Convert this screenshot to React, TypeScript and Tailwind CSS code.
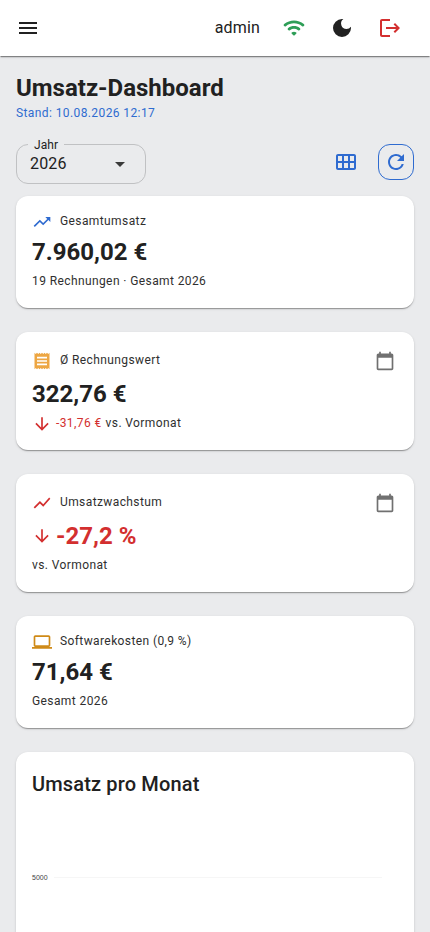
import type { ReactNode } from "react";
import {
  MdArrowDownward,
  MdArrowDropDown,
  MdCalendarToday,
  MdCalendarViewMonth,
  MdDarkMode,
  MdLaptop,
  MdLogout,
  MdMenu,
  MdReceipt,
  MdRefresh,
  MdShowChart,
  MdTrendingUp,
} from "react-icons/md";

const cardShadow =
  "shadow-[0px_2px_1px_-1px_rgba(0,0,0,0.2),0px_1px_1px_0px_rgba(0,0,0,0.14),0px_1px_3px_0px_rgba(0,0,0,0.12)]";

function WifiIcon() {
  return (
    <svg viewBox="0 0 24 24" width="24" height="24" fill="currentColor">
      <path d="M2.06 10.06c.51.51 1.32.56 1.87.1 4.67-3.84 11.45-3.84 16.13-.01.56.46 1.38.42 1.89-.09.59-.59.55-1.57-.1-2.1-5.71-4.67-13.97-4.67-19.69 0-.65.52-.7 1.5-.1 2.1zm7.76 7.76 1.47 1.47c.39.39 1.02.39 1.41 0l1.47-1.47c.47-.47.37-1.28-.23-1.59a4.28 4.28 0 0 0-3.9 0c-.57.31-.68 1.12-.22 1.59zm-3.73-3.73c.49.49 1.26.54 1.83.13a7.064 7.064 0 0 1 8.16 0c.57.4 1.34.36 1.83-.13l.01-.01c.6-.6.56-1.62-.13-2.11-3.44-2.49-8.13-2.49-11.58 0-.69.5-.73 1.51-.12 2.12z" />
    </svg>
  );
}

type KpiProps = {
  icon: ReactNode;
  label: string;
  value: ReactNode;
  note: ReactNode;
  calendar?: boolean;
};

function KpiCard({ icon, label, value, note, calendar }: KpiProps) {
  return (
    <section
      className={`flex flex-col rounded-xl bg-white px-4 pt-4 ${cardShadow} ${calendar ? "h-[118px]" : "h-28"}`}
    >
      <div className={`flex items-center ${calendar ? "h-[26px]" : "h-5"}`}>
        {icon}
        <span className="-mt-0.5 ml-2 grow text-xs tracking-[0.4px] text-[#2f2f2f]">{label}</span>
        {calendar && <MdCalendarToday size={20} className="mr-[3px] text-[#707070]" />}
      </div>
      <div className="mt-1 flex h-8 items-center text-2xl font-bold">{value}</div>
      <div className="mt-[3px] flex h-5 items-center text-xs tracking-[0.4px] text-[#2f2f2f]">{note}</div>
    </section>
  );
}

export default function App() {
  return (
    <div className="h-[932px] overflow-hidden bg-[#eaebed] font-[Roboto,sans-serif] text-[#212121]">
      <header className="relative flex h-14 items-center bg-white pr-4 pl-4 shadow-[0px_2px_1px_-1px_rgba(0,0,0,0.3),0px_1px_1px_0px_rgba(0,0,0,0.14),0px_1px_3px_0px_rgba(0,0,0,0.12)]">
        <MdMenu size={24} />
        <span className="ml-auto text-base tracking-[0.15px]">admin</span>
        <span className="ml-[22px] text-[#2e9e57]">
          <WifiIcon />
        </span>
        <MdDarkMode size={24} className="ml-6" />
        <MdLogout size={24} className="mr-3 ml-6 text-[#d32f2f]" />
      </header>

      <main className="px-4 pt-4">
        <h1 className="text-2xl leading-8 font-bold">Umsatz-Dashboard</h1>
        <p className="text-xs leading-[18px] tracking-[0.4px] text-[#2f6bd0]">Stand: 10.08.2026 12:17</p>

        <div className="mt-[22px] flex h-10 items-start">
          <div className="relative flex h-10 w-[130px] items-center rounded-xl border border-[#c0c1c3] pr-[13px] pl-[13px]">
            <span className="absolute -top-[10px] left-[11px] bg-[#eaebed] px-[6px] text-xs leading-5 tracking-[0.1px]">
              Jahr
            </span>
            <span className="grow text-base tracking-[0.15px]">2026</span>
            <MdArrowDropDown size={24} className="text-[#3a3a3a]" />
          </div>
          <MdCalendarViewMonth size={24} className="mt-1.5 mr-5 ml-auto text-[#2f6bd0]" />
          <button className="flex h-9 w-9 items-center justify-center rounded-xl border border-[#2f6bd0] text-[#2f6bd0]">
            <MdRefresh size={24} />
          </button>
        </div>

        <div className="mt-3 flex flex-col gap-6">
          <KpiCard
            icon={<MdTrendingUp size={20} className="text-[#2f6bd0]" />}
            label="Gesamtumsatz"
            value="7.960,02 €"
            note="19 Rechnungen · Gesamt 2026"
          />
          <KpiCard
            calendar
            icon={<MdReceipt size={20} className="text-[#eda642]" />}
            label="Ø Rechnungswert"
            value="322,76 €"
            note={
              <>
                <MdArrowDownward size={20} className="mt-0.5 mr-1 text-[#d32f2f]" />
                <span className="mr-1 text-[#d32f2f]">-31,76 €</span>
                vs. Vormonat
              </>
            }
          />
          <KpiCard
            calendar
            icon={<MdShowChart size={20} className="text-[#d32f2f]" />}
            label="Umsatzwachstum"
            value={
              <span className="flex items-center text-[#d32f2f]">
                <MdArrowDownward size={20} className="mr-1" />
                -27,2 %
              </span>
            }
            note="vs. Vormonat"
          />
          <KpiCard
            icon={<MdLaptop size={20} className="text-[#cf8a17]" />}
            label="Softwarekosten (0,9 %)"
            value="71,64 €"
            note="Gesamt 2026"
          />
          <section className={`h-[420px] rounded-xl bg-white px-4 pt-4 ${cardShadow}`}>
            <h2 className="text-xl leading-8 font-medium tracking-[0.15px]">Umsatz pro Monat</h2>
            <div className="mt-[73px] flex items-start font-['Liberation_Sans',sans-serif] text-[7px] leading-[10px]">
              <span className="w-[22px] text-[#444]">5000</span>
              <span className="mt-1 h-px w-[328px] bg-[#f6f6f6]" />
            </div>
          </section>
        </div>
      </main>
    </div>
  );
}
